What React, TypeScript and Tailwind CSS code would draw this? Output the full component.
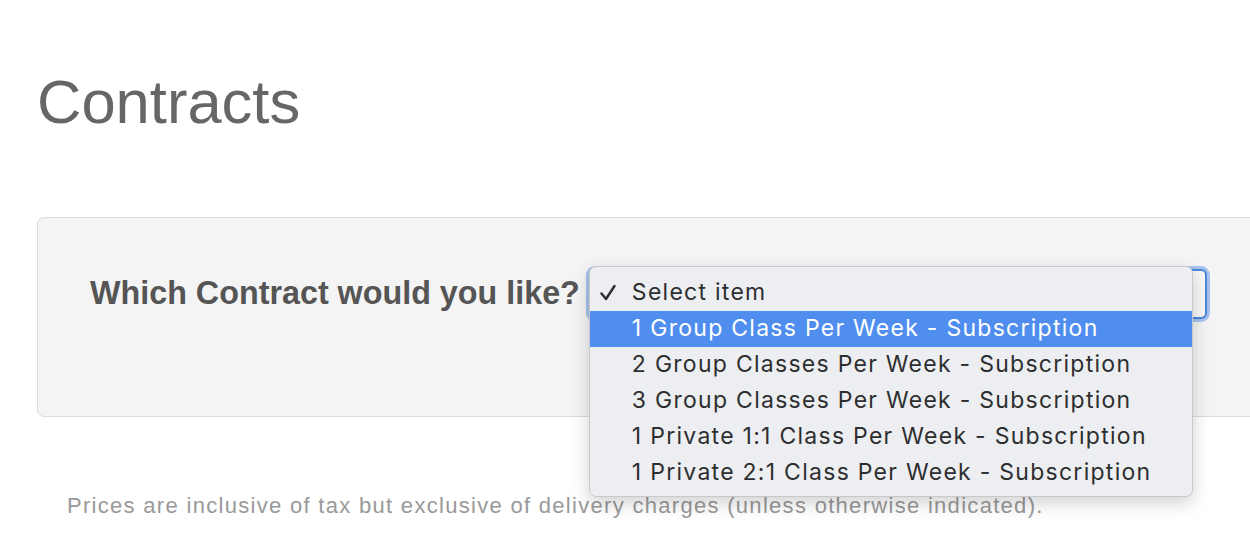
import React from "react";

const options = [
  "1 Group Class Per Week - Subscription",
  "2 Group Classes Per Week - Subscription",
  "3 Group Classes Per Week - Subscription",
  "1 Private 1:1 Class Per Week - Subscription",
  "1 Private 2:1 Class Per Week - Subscription",
];

export default function App() {
  return (
    <div className="w-[1250px] h-[550px] overflow-hidden bg-white font-['Liberation_Sans',Arial,sans-serif]">
      <div className="pl-[37px] pt-[71px]">
        <h1 className="text-[61.5px] leading-none text-[#666] font-normal">Contracts</h1>
        <div className="mt-[84px] w-[1280px] h-[200px] rounded-[7px] border border-[#dcdcdc] bg-[#f4f4f4] pt-[51px] pl-[52px]">
          <div className="flex items-center">
            <label className="text-[32.3px] leading-none font-bold text-[#555]">Which Contract would you like?</label>
            <div className="relative ml-[9px] w-[618px] h-[50px]">
              <div className="w-full h-full rounded-[6px] border-2 border-[#4a86d8] bg-[#f7f7f7] shadow-[0_0_0_3px_rgba(74,134,230,0.45)]" />
              <div className="absolute left-0 top-[-3px] w-[604px] h-[231px] rounded-[7px] border border-[#c9c9cc] bg-[#edeef1] shadow-[0_6px_18px_rgba(0,0,0,0.18)] pt-[8px] pb-[7px] z-10 font-['Inter',sans-serif] text-[23px] tracking-[1.27px] text-[#2e2e30]">
                <div className="relative h-[36px] flex items-center pl-[42px]">
                  <span className="absolute left-[10px] top-[8px] w-[16px] h-[20px]">
                    <svg viewBox="0 0 16 20" width="16" height="20">
                      <path d="M1.5 10.5 L6 16 L14.5 3" fill="none" stroke="#2e2e30" strokeWidth="2.4" strokeLinecap="round" strokeLinejoin="round" />
                    </svg>
                  </span>
                  Select item
                </div>
                {options.map((o, i) => (
                  <div
                    key={o}
                    className={
                      i === 0
                        ? "h-[36px] flex items-center pl-[42px] bg-[#4f8eef] text-white"
                        : "h-[36px] flex items-center pl-[42px]"
                    }
                  >
                    {o}
                  </div>
                ))}
              </div>
            </div>
          </div>
        </div>
        <p className="mt-[78px] pl-[30px] text-[22px] tracking-[1.3px] leading-none text-[#999]">
          Prices are inclusive of tax but exclusive of delivery charges (unless otherwise indicated).
        </p>
      </div>
    </div>
  );
}
